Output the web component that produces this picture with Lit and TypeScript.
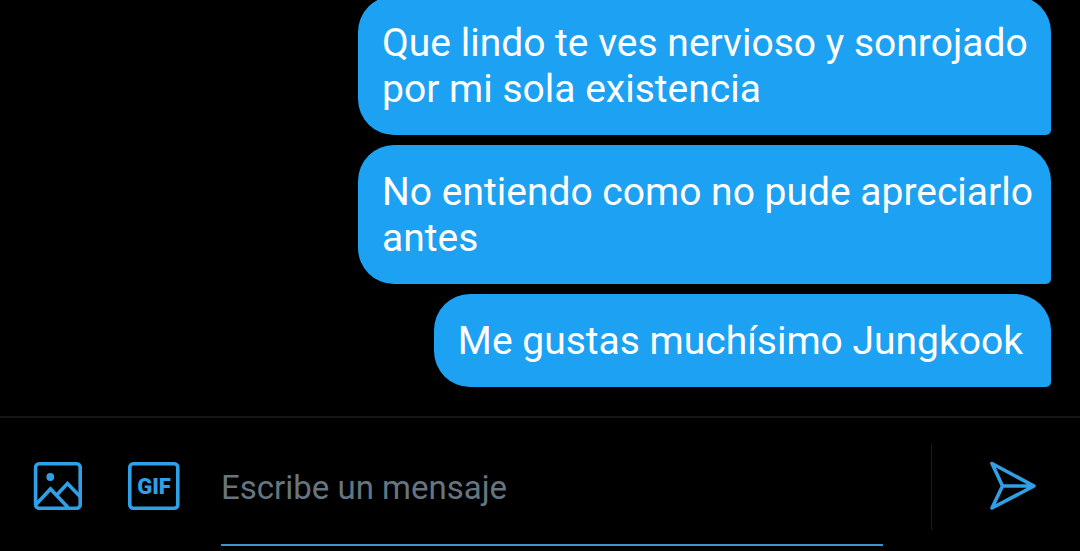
import { LitElement, html, css } from "lit";
import { customElement, property, state } from "lit/decorators.js";
import { classMap } from "lit/directives/class-map.js";

interface Message {
  text: string;
  short?: boolean;
}

@customElement("message-bubble")
export class MessageBubble extends LitElement {
  @property() text = "";
  @property({ type: Boolean }) short = false;

  static styles = css`
    :host {
      display: block;
      max-width: 693px;
    }
    .bubble {
      margin: 0;
      box-sizing: border-box;
      padding: 24px 16px 23px 24px;
      border-radius: 36px 36px 5px 36px;
      background: #1da1f2;
      color: #fff;
      font-size: 39px;
      line-height: 46px;
    }
    .short {
      padding-right: 28px;
    }
  `;

  render() {
    return html`<p class=${classMap({ bubble: true, short: this.short })}>${this.text}</p>`;
  }
}

@customElement("message-composer")
export class MessageComposer extends LitElement {
  @state() private draft = "";

  static styles = css`
    :host {
      display: block;
    }
    .bar {
      display: flex;
      align-items: center;
      height: 131px;
      border-top: 2px solid #161616;
      padding: 2px 43px 0 32px;
    }
    button {
      display: block;
      flex: none;
      margin: 0;
      padding: 0;
      border: 0;
      background: none;
      color: #2f9fe6;
      cursor: pointer;
    }
    svg {
      display: block;
    }
    .gif {
      margin-left: 44px;
    }
    .gif text {
      font: 900 22px Roboto, sans-serif;
    }
    .field {
      flex: 1;
      align-self: stretch;
      display: flex;
      min-width: 0;
      margin: 0 48px 5px 40px;
      border-bottom: 2px solid #3f93cb;
    }
    input {
      flex: 1;
      min-width: 0;
      padding: 10px 0 0;
      border: 0;
      outline: 0;
      background: none;
      color: #fff;
      font: 33px Roboto, sans-serif;
    }
    input::placeholder {
      color: #66757f;
      opacity: 1;
    }
    .divider {
      flex: none;
      width: 1px;
      height: 86px;
      margin: 2px 56px 0 0;
      background: #1c1c1c;
    }
  `;

  private onInput(e: Event) {
    this.draft = (e.target as HTMLInputElement).value;
  }

  private onSubmit(e: Event) {
    e.preventDefault();
    this.draft = "";
  }

  render() {
    return html`
      <form class="bar" @submit=${this.onSubmit}>
        <button type="button" aria-label="Añadir imagen">
          <svg width="51" height="52" viewBox="0 0 51 52" fill="none" stroke="currentColor" stroke-width="3.6">
            <rect x="3.6" y="3.8" width="44.6" height="44.4" rx="3.5" />
            <path d="M4 44.5 18.5 29 36 47.5M24.5 35.3 35.5 23.5 48 36.5" />
            <circle cx="18.3" cy="17" r="3.9" fill="currentColor" stroke="none" />
          </svg>
        </button>
        <button class="gif" type="button" aria-label="Añadir GIF">
          <svg width="54" height="52" viewBox="0 0 54 52" fill="none" stroke="currentColor" stroke-width="3.6">
            <rect x="2.8" y="3.8" width="48" height="44.4" rx="3.5" />
            <text x="27" y="34" text-anchor="middle" fill="currentColor" stroke="none">GIF</text>
          </svg>
        </button>
        <div class="field">
          <input
            type="text"
            aria-label="Escribe un mensaje"
            placeholder="Escribe un mensaje"
            .value=${this.draft}
            @input=${this.onInput}
          />
        </div>
        <span class="divider"></span>
        <button type="submit" aria-label="Enviar">
          <svg width="49" height="52" viewBox="0 0 49 52" fill="none" stroke="currentColor" stroke-width="3.6" stroke-linejoin="round" stroke-linecap="round">
            <path d="M4 3.5 46 26 4 48 14.5 26ZM14.5 26H46" />
          </svg>
        </button>
      </form>
    `;
  }
}

@customElement("app-root")
export class AppRoot extends LitElement {
  private messages: Message[] = [
    { text: "Que lindo te ves nervioso y sonrojado por mi sola existencia" },
    { text: "No entiendo como no pude apreciarlo antes" },
    { text: "Me gustas muchísimo Jungkook", short: true },
  ];

  static styles = css`
    :host {
      display: flex;
      flex-direction: column;
      height: 100vh;
      overflow: hidden;
      background: #000;
      font-family: Roboto, sans-serif;
    }
    .thread {
      flex: 1;
      min-height: 0;
      overflow: hidden;
      display: flex;
      flex-direction: column;
      justify-content: flex-end;
      align-items: flex-end;
      gap: 10px;
      padding: 0 29px 29px;
    }
    message-bubble {
      flex: none;
    }
  `;

  render() {
    return html`
      <main class="thread">
        ${this.messages.map(
          (m) => html`<message-bubble .text=${m.text} ?short=${m.short}></message-bubble>`
        )}
      </main>
      <message-composer></message-composer>
    `;
  }
}
